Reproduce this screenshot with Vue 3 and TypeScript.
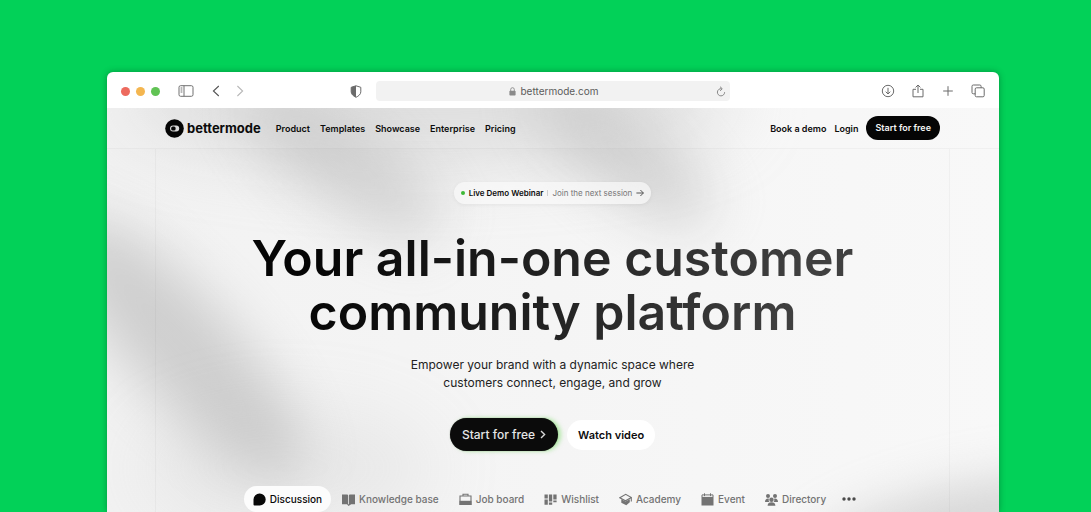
<script setup lang="ts">
import { ref } from 'vue'

type TabIcon = 'discussion' | 'book' | 'job' | 'wishlist' | 'academy' | 'event' | 'directory'

interface Tab {
  label: string
  icon: TabIcon
}

const address = ref('bettermode.com')
const activeTab = ref<TabIcon>('discussion')

const navLinks: string[] = ['Product', 'Templates', 'Showcase', 'Enterprise', 'Pricing']

const tabs: Tab[] = [
  { label: 'Discussion', icon: 'discussion' },
  { label: 'Knowledge base', icon: 'book' },
  { label: 'Job board', icon: 'job' },
  { label: 'Wishlist', icon: 'wishlist' },
  { label: 'Academy', icon: 'academy' },
  { label: 'Event', icon: 'event' },
  { label: 'Directory', icon: 'directory' },
]
</script>

<template>
  <main class="stage">
    <div class="window">
      <header class="toolbar">
        <div class="tools tools-left">
          <div class="lights">
            <button class="light red" type="button" aria-label="Close"></button>
            <button class="light amber" type="button" aria-label="Minimize"></button>
            <button class="light green" type="button" aria-label="Zoom"></button>
          </div>
          <button class="tool sidebar" type="button" aria-label="Sidebar">
            <svg width="16" height="12" viewBox="0 0 16 12" fill="none" stroke="#707070">
              <rect x="1" y="0.7" width="14" height="10.6" rx="1.6" />
              <path d="M6 .7v10.6M2.6 3h1.8M2.6 5h1.8M2.6 7h1.8" />
            </svg>
          </button>
          <button class="tool" type="button" aria-label="Back">
            <svg width="8" height="12" viewBox="0 0 8 12" fill="none" stroke="#555" stroke-width="1.1">
              <path d="M6.8 1 1.4 6l5.4 5" />
            </svg>
          </button>
          <button class="tool forward" type="button" aria-label="Forward">
            <svg width="8" height="12" viewBox="0 0 8 12" fill="none" stroke="#b8b8b8" stroke-width="1.1">
              <path d="m1.4 1 5.2 5-5.2 5" />
            </svg>
          </button>
          <button class="tool shield" type="button" aria-label="Privacy report">
            <svg width="12" height="13" viewBox="0 0 12 13">
              <path d="M6 .8 10.8 2.3v4.5c0 2.600-2.300 4.300-4.800 5.500C3.500 11.100 1.200 9.400 1.200 6.800V2.300Z" fill="none" stroke="#6b6b6b" />
              <path d="M6 .8v11.500C3.500 11.100 1.200 9.400 1.200 6.800V2.300Z" fill="#6b6b6b" />
            </svg>
          </button>
        </div>

        <div class="address">
          <svg class="lock" width="7" height="9" viewBox="0 0 7 9">
            <rect x=".4" y="3.700" width="6.200" height="4.900" rx=".8" fill="#8a8a8a" />
            <path d="M1.700 4V2.500a1.800 1.800 0 0 1 3.600 0V4" fill="none" stroke="#8a8a8a" stroke-width=".9" />
          </svg>
          <input v-model="address" type="text" aria-label="Address" />
          <button class="tool reload" type="button" aria-label="Reload">
            <svg width="10" height="11" viewBox="0 0 10 11" fill="none" stroke="#7c7c7c" stroke-width=".9">
              <path d="M5.500 2.700A3.600 3.600 0 1 0 8.600 6.200M4 .7l2.200 2L4.200 4.900" />
            </svg>
          </button>
        </div>

        <div class="tools tools-right">
          <button class="tool" type="button" aria-label="Downloads">
            <svg width="14" height="14" viewBox="0 0 14 14" fill="none" stroke="#6b6b6b">
              <circle cx="7" cy="7" r="5.700" />
              <path d="M7 3.800v6.200M4.700 7.700 7 10l2.300-2.300" />
            </svg>
          </button>
          <button class="tool" type="button" aria-label="Share">
            <svg width="14" height="14" viewBox="0 0 14 14" fill="none" stroke="#6b6b6b">
              <path d="M5 5.300H2v7.500h10V5.300H9M7 9V1.200M4.600 3.400 7 1l2.400 2.400" />
            </svg>
          </button>
          <button class="tool" type="button" aria-label="New tab">
            <svg width="14" height="14" viewBox="0 0 14 14" stroke="#6b6b6b">
              <path d="M7 2.200v9.600M2.200 7h9.600" />
            </svg>
          </button>
          <button class="tool" type="button" aria-label="Tab overview">
            <svg width="14" height="14" viewBox="0 0 14 14" fill="none" stroke="#6b6b6b">
              <path d="M4.200 9.800H2.300A1.300 1.300 0 0 1 1 8.500V2.300A1.300 1.300 0 0 1 2.300 1h6.500a1.300 1.300 0 0 1 1.300 1.300v1.500" />
              <rect x="4.200" y="3.800" width="9" height="9" rx="1.300" />
            </svg>
          </button>
        </div>
      </header>

      <div class="site">
        <svg class="backdrop" viewBox="0 0 892 404" preserveAspectRatio="none" aria-hidden="true">
          <defs>
            <filter id="soft" x="-60%" y="-150%" width="220%" height="400%">
              <feGaussianBlur stdDeviation="27" />
            </filter>
            <filter id="wide" x="-80%" y="-150%" width="260%" height="400%">
              <feGaussianBlur stdDeviation="38" />
            </filter>
            <linearGradient id="base" x1="0" y1="0" x2="1" y2="0">
              <stop offset="0" stop-color="#f2f2f2" />
              <stop offset="1" stop-color="#f8f8f8" />
            </linearGradient>
          </defs>
          <rect width="892" height="404" fill="url(#base)" />
          <ellipse cx="320" cy="-10" rx="310" ry="60" fill="#c0c0c0" opacity=".5" filter="url(#wide)" />
          <ellipse cx="235" cy="55" rx="120" ry="42" fill="#b4b4b4" opacity=".45" transform="rotate(36 235 55)" filter="url(#soft)" />
          <ellipse cx="515" cy="45" rx="110" ry="40" fill="#b4b4b4" opacity=".48" transform="rotate(38 515 45)" filter="url(#soft)" />
          <ellipse cx="75" cy="240" rx="170" ry="52" fill="#a4a4a4" opacity=".46" transform="rotate(48 75 240)" filter="url(#soft)" />
          <ellipse cx="180" cy="360" rx="150" ry="60" fill="#b0b0b0" opacity=".18" filter="url(#wide)" />
          <ellipse cx="840" cy="418" rx="140" ry="32" fill="#aaa" opacity=".5" transform="rotate(-14 840 418)" filter="url(#soft)" />
        </svg>

        <nav class="nav" aria-label="Main">
          <div class="nav-inner">
            <a class="brand" href="#">
              <svg width="19" height="19" viewBox="0 0 19 19">
                <circle cx="9.500" cy="9.500" r="9.300" fill="#050505" />
                <rect x="5" y="6.400" width="9.200" height="6.200" rx="3" fill="#d9d9d9" />
                <rect x="6.200" y="7.400" width="4.400" height="4.200" rx="1.600" fill="#050505" />
              </svg>
              <span>bettermode</span>
            </a>
            <a v-for="link in navLinks" :key="link" class="link" href="#">{{ link }}</a>
            <div class="account">
              <a class="link" href="#">Book a demo</a>
              <a class="link" href="#">Login</a>
              <a class="nav-cta" href="#">Start for free</a>
            </div>
          </div>
        </nav>

        <section class="hero">
          <a class="badge" href="#">
            <span class="dot"></span>
            <strong>Live Demo Webinar</strong>
            <span class="divider"></span>
            <span>Join the next session</span>
            <svg width="8" height="8" viewBox="0 0 8 8" fill="none" stroke="#555">
              <path d="M.4 4h7M4.400 1l3 3-3 3" />
            </svg>
          </a>

          <h1>Your all-in-one customer<br />community platform</h1>
          <p>Empower your brand with a dynamic space where<br />customers connect, engage, and grow</p>

          <div class="actions">
            <button class="primary" type="button">
              Start for free
              <svg width="6" height="9" viewBox="0 0 6 9" fill="none" stroke="#d8d8d8" stroke-width="1.400">
                <path d="m1 1 3.600 3.500L1 8" />
              </svg>
            </button>
            <button class="secondary" type="button">Watch video</button>
          </div>

          <div class="tabs">
            <button
              v-for="tab in tabs"
              :key="tab.icon"
              type="button"
              class="tab"
              :class="{ active: tab.icon === activeTab }"
              @click="activeTab = tab.icon"
            >
              <svg width="13" height="13" viewBox="0 0 13 13" fill="currentColor">
                <path v-if="tab.icon === 'discussion'" d="M6.700.5a6 6 0 1 1 0 12H1.500a1 1 0 0 1-1-1V6.500a6 6 0 0 1 6.200-6Z" />
                <path v-else-if="tab.icon === 'book'" d="M0 1.500h5.200c.5 0 .9.300.9.900v8.800H0ZM6.900 2.400c0-.6.400-.9.900-.9H13v9.700H9.200L6.500 13 5 11.200h1.900Z" />
                <template v-else-if="tab.icon === 'job'">
                  <path d="M4 3V1.300h5V3M1 3h11v8.500H1Z" fill="none" stroke="currentColor" stroke-width="1.100" />
                  <path d="M.5 7.800h12V12H.5Z" />
                </template>
                <path v-else-if="tab.icon === 'wishlist'" d="M.5 1.500h3.300v4H.5ZM4.900 1.500h3.300v7H4.900ZM9.300 1.500h3.300v5H9.300ZM.5 6.500h3.300v5.300H.5ZM4.900 9.400h3.300v2.400H4.900ZM9.300 7.500h3.300v1.800H9.300Z" />
                <template v-else-if="tab.icon === 'academy'">
                  <path d="m.8 4.700 5.900-3.400 5.700 3.200-5.900 3.300ZM12.300 4.600v4" fill="none" stroke="currentColor" stroke-width="1.100" />
                  <path d="m2.300 6.300 4.200 2.300 4.300-2.300v3L7.300 12.300 2.300 9.800Z" />
                </template>
                <template v-else-if="tab.icon === 'event'">
                  <path d="M.5 3.900h12v8.600H.5Z" />
                  <path d="M1 4V1.900h11V4M3.500.3v2.800M9.500.3v2.800" fill="none" stroke="currentColor" />
                </template>
                <template v-else>
                  <circle cx="3" cy="3" r="2" />
                  <circle cx="10" cy="3" r="2" />
                  <circle cx="6.500" cy="6.800" r="2.200" />
                  <path d="M0 9c0-2.300 1.200-3.500 3-3.500l1 .3c-.6 1.300-.3 2.500.3 3.200ZM13 9c0-2.300-1.200-3.500-3-3.500l-1 .3c.6 1.300.3 2.500-.3 3.200ZM2.600 12.800c0-2.600 1.600-3.600 3.900-3.600s3.900 1 3.900 3.600Z" />
                </template>
              </svg>
              {{ tab.label }}
            </button>
            <button class="tab more" type="button" aria-label="More">
              <svg width="14" height="4" viewBox="0 0 14 4" fill="#4a4a4a">
                <circle cx="2" cy="2" r="1.700" />
                <circle cx="7" cy="2" r="1.700" />
                <circle cx="12" cy="2" r="1.700" />
              </svg>
            </button>
          </div>
        </section>
      </div>
    </div>
  </main>
</template>

<style>
body {
  margin: 0;
  background: #02d158;
}
</style>

<style scoped>
.stage {
  box-sizing: border-box;
  display: flex;
  min-height: 100vh;
  padding: 72px 92px 0 107px;
  background: #02d158;
  color: #0c0c0c;
  font-family: Inter, "Liberation Sans", sans-serif;
}

button,
input {
  padding: 0;
  border: 0;
  background: none;
  color: inherit;
  font: inherit;
}

a {
  color: inherit;
  text-decoration: none;
}

svg {
  display: block;
  flex: none;
}

.window {
  display: flex;
  flex: 1;
  flex-direction: column;
  overflow: hidden;
  border-radius: 6px 6px 0 0;
  background: #fff;
  box-shadow: 0 0 6px rgba(0, 70, 30, 0.45);
}

.toolbar {
  display: grid;
  grid-template-columns: 1fr 41% 1fr;
  align-items: center;
  height: 36px;
  padding: 0 14px;
}

.tools {
  display: flex;
  align-items: center;
  padding-top: 2px;
}

.lights {
  display: flex;
  gap: 6px;
}

.light {
  width: 9px;
  height: 9px;
  border-radius: 50%;
}

.red {
  background: #ed6a5e;
}

.amber {
  background: #f4b650;
}

.green {
  background: #61c354;
}

.sidebar {
  margin: 0 18px;
}

.forward {
  margin-left: 16px;
}

.shield {
  margin: 0 14px 0 auto;
}

.tools-right {
  justify-content: flex-end;
  gap: 16px;
}

.address {
  display: flex;
  align-items: center;
  justify-content: center;
  gap: 4px;
  height: 20px;
  margin-top: 2px;
  border-radius: 4px;
  background: #f2f2f2;
  color: #5c5c5c;
  font-size: 10px;
}

.address input {
  width: 80px;
}

.address::before {
  width: 18px;
  margin-right: auto;
  content: "";
}

.reload {
  margin: 0 4px 0 auto;
}

.site {
  position: relative;
  flex: 1;
  overflow: hidden;
}

.backdrop {
  position: absolute;
  inset: 0;
  width: 100%;
  height: 100%;
}

.nav {
  position: relative;
  border-bottom: 1px solid rgba(0, 0, 0, 0.03);
  background: rgba(255, 255, 255, 0.1);
}

.nav-inner {
  display: flex;
  align-items: center;
  gap: 10px;
  height: 40px;
  margin: 0 49px;
  padding: 0 10px 0 9px;
  font-size: 9px;
  font-weight: 600;
}

.brand {
  display: flex;
  align-items: center;
  gap: 3px;
  margin-right: 5px;
  font-size: 13px;
  font-weight: 700;
}

.account {
  display: flex;
  align-items: center;
  gap: 8px;
  margin-left: auto;
}

.nav-cta {
  padding: 0 9px;
  border-radius: 12px;
  background: #050505;
  color: #f4f4f4;
  line-height: 24px;
}

.hero {
  position: relative;
  display: flex;
  flex-direction: column;
  align-items: center;
  margin: 0 49px 0 48px;
  padding-top: 33px;
  border: solid rgba(0, 0, 0, 0.03);
  border-width: 0 1px;
  text-align: center;
}

.badge {
  display: flex;
  align-items: center;
  gap: 4px;
  height: 22px;
  padding: 0 7px;
  border-radius: 11px;
  background: rgba(250, 250, 250, 0.7);
  box-shadow: 0 1px 4px rgba(0, 0, 0, 0.06);
  color: #777;
  font-size: 8px;
}

.badge strong {
  color: #0c0c0c;
  font-weight: 600;
}

.dot {
  width: 4px;
  height: 4px;
  border-radius: 50%;
  background: #3db836;
}

.divider {
  width: 1px;
  height: 6px;
  background: #d0d0d0;
}

h1 {
  margin: 27px 0 0;
  padding-bottom: 6px;
  background: linear-gradient(100deg, #050505 10%, #404040 90%);
  background-clip: text;
  color: transparent;
  font-size: 50px;
  font-weight: 600;
  line-height: 54px;
  white-space: nowrap;
}

p {
  margin: 11px 0 0;
  color: #222;
  font-size: 12px;
  line-height: 18px;
}

.actions {
  display: flex;
  align-items: center;
  gap: 9px;
  margin-top: 26px;
}

.primary,
.secondary {
  display: flex;
  align-items: center;
  gap: 5px;
  height: 30px;
  padding: 0 11px;
  border-radius: 17px;
  background: #fff;
  font-size: 11px;
  font-weight: 600;
}

.primary {
  height: 33px;
  padding: 0 12px;
  background: #0b0b0b;
  box-shadow: 3px 0 4px rgba(120, 220, 100, 0.55), 0 0 1px #555;
  color: #e6e6e6;
  font-size: 12px;
  font-weight: 500;
}

.tabs {
  display: flex;
  gap: 2px;
  margin-top: 35px;
}

.tab {
  display: flex;
  align-items: center;
  gap: 4px;
  height: 26px;
  padding: 0 9px;
  border-radius: 13px;
  color: #737373;
  font-size: 10px;
  font-weight: 500;
  white-space: nowrap;
}

.tab.active {
  background: #fcfcfc;
  color: #080808;
}

.tab.more {
  padding: 0 5px;
}
</style>
